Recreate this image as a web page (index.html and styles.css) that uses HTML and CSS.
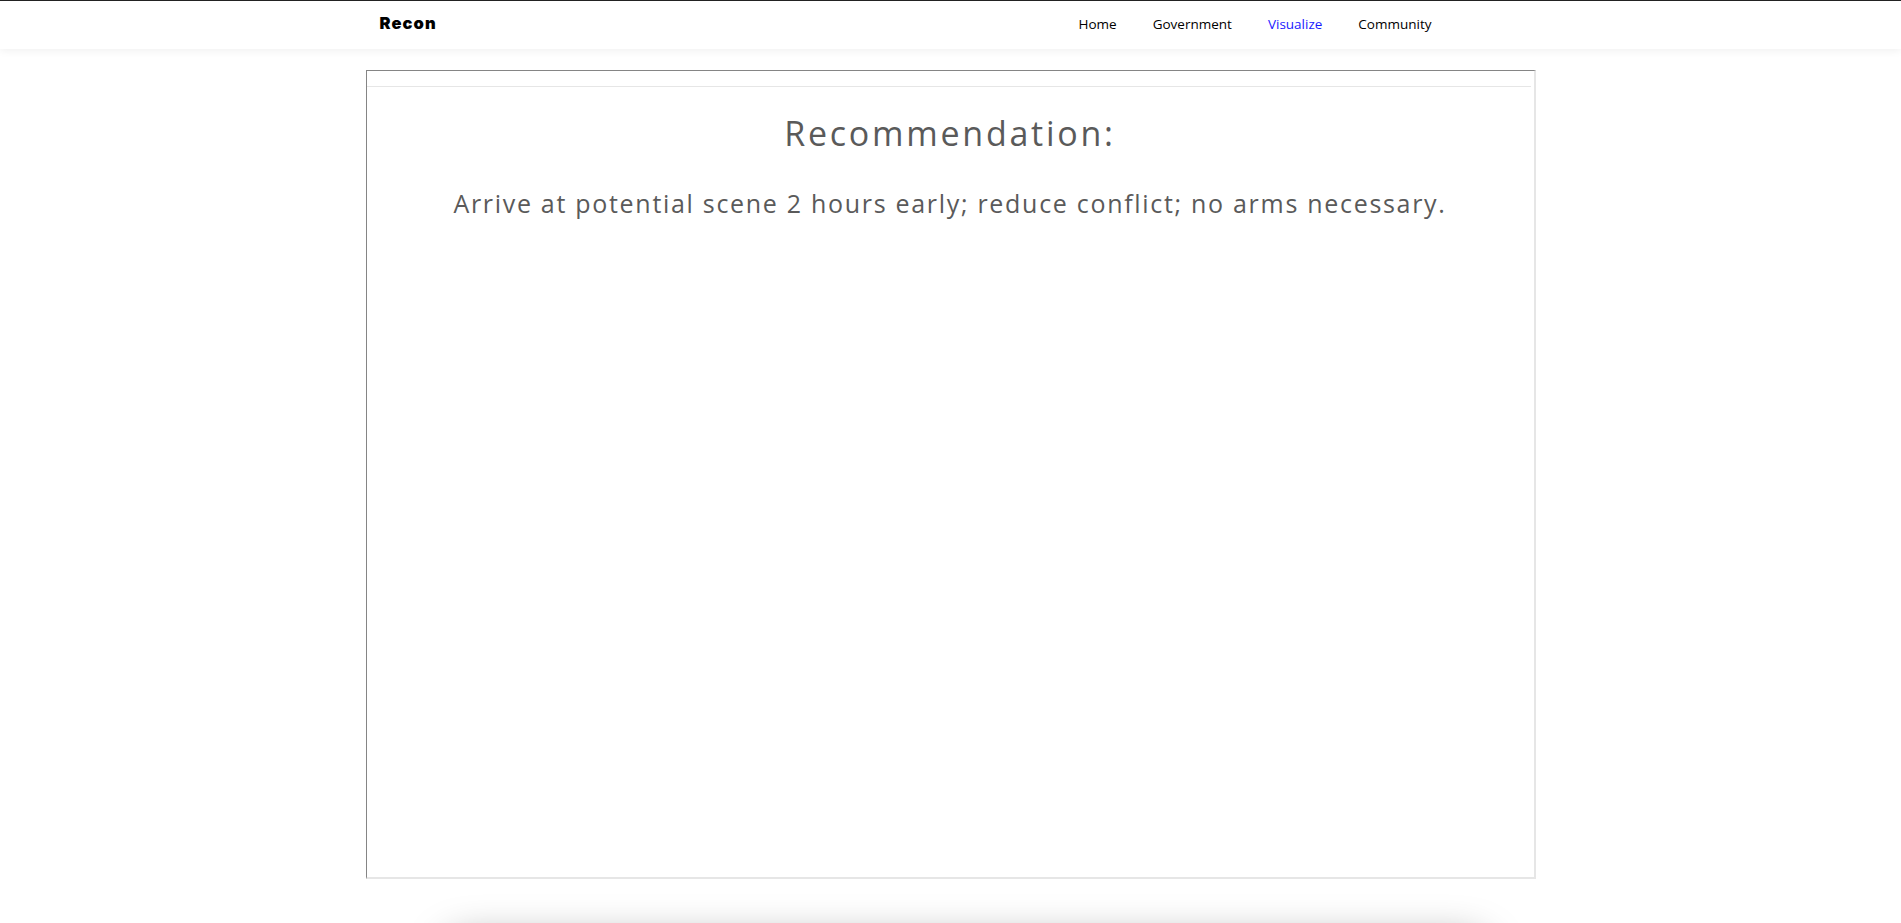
FILE: index.html
```html
<!DOCTYPE html>
<html lang="en">
<head>
    <meta charset="UTF-8">
    <meta name="viewport" content="width=device-width, initial-scale=1.0">
    <title>Recon</title>
    <link rel="stylesheet" href="styles.css">
</head>
<body>
    <header class="navbar">
        <div class="container nav-inner">
            <a class="brand" href="#">Recon</a>
            <ul class="nav-links">
                <li><a href="#">Home</a></li>
                <li><a href="#">Government</a></li>
                <li><a href="#" class="active">Visualize</a></li>
                <li><a href="#">Community</a></li>
            </ul>
        </div>
    </header>

    <main class="container">
        <div class="frame">
            <div class="frame-bar"></div>
            <h2 class="rec-title">Recommendation:</h2>
            <p class="rec-text">Arrive at potential scene 2 hours early; reduce conflict; no arms necessary.</p>
        </div>

        <div class="panel"></div>
    </main>
</body>
</html>
```

FILE: styles.css
```css
body {
    margin: 0;
    padding: 0;
    border-top: 1px solid #222;
    background: #fff;
    font-family: 'Open Sans', 'Liberation Sans', sans-serif;
    color: #000;
}
.container {
    width: 1170px;
    margin: 0 auto;
}
.navbar {
    background: #fff;
    height: 48px;
    box-shadow: 0 2px 8px rgba(0, 0, 0, 0.06);
    position: relative;
    z-index: 2;
}
.nav-inner {
    box-sizing: border-box;
    display: flex;
    align-items: center;
    justify-content: space-between;
    height: 100%;
    padding-bottom: 4px;
}
.brand {
    margin-left: 14px;
    font-family: 'Inter', 'Open Sans', sans-serif;
    font-weight: 900;
    font-size: 16.5px;
    letter-spacing: 1.1px;
    color: #000;
    text-decoration: none;
}
.nav-links {
    display: flex;
    list-style: none;
    margin: 0 104px 0 0;
    padding: 0;
    gap: 36px;
}
.nav-links a {
    font-size: 13.5px;
    color: #000;
    text-decoration: none;
}
.nav-links a.active {
    color: #1a1aff;
}
.frame {
    box-sizing: border-box;
    margin-top: 21px;
    height: 809px;
    border-top: 1px solid #858585;
    border-left: 1px solid #858585;
    border-right: 2px solid #e6e6e6;
    border-bottom: 2px solid #e6e6e6;
    text-align: center;
    color: #5a5a5a;
}
.frame-bar {
    height: 15px;
    margin-right: 3px;
    border-bottom: 1px solid #e6e6e6;
}
.rec-title {
    margin: 24px 0 0;
    font-size: 34px;
    font-weight: 400;
    line-height: 44px;
    letter-spacing: 2.75px;
}
.rec-text {
    margin: 32px 0 0;
    font-size: 25px;
    font-weight: 400;
    line-height: 32px;
    letter-spacing: 1.7px;
}
.panel {
    width: 1040px;
    height: 300px;
    margin: 60px 0 40px 80px;
    background: #fff;
    border-radius: 20px;
    box-shadow: 0 0 40px rgba(0, 0, 0, 0.38);
}
```
